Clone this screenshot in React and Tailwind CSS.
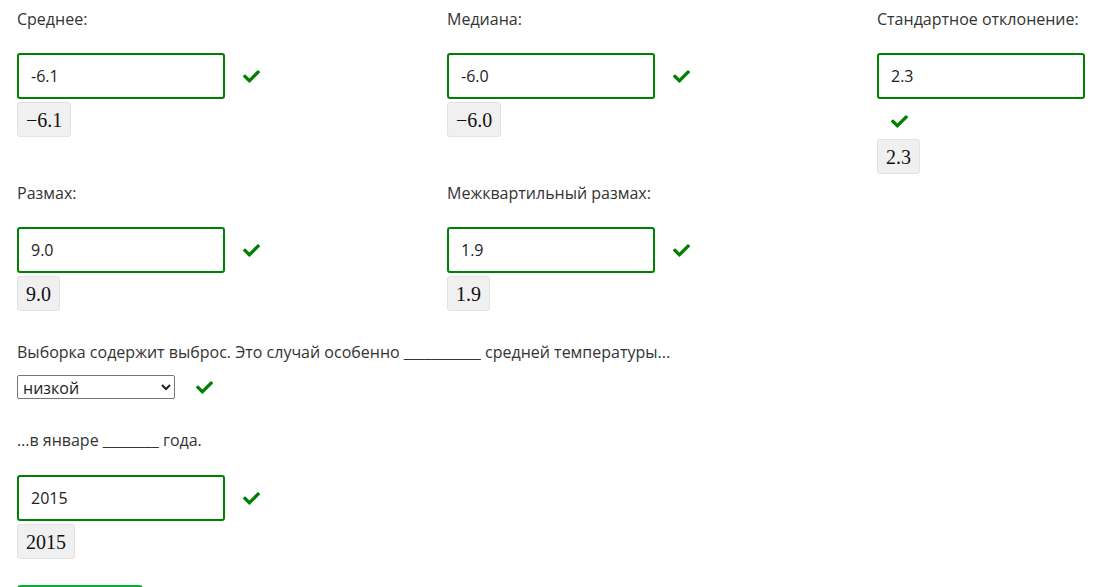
import React from 'react';
import { FaCheck } from 'react-icons/fa';

const Check = () => (
  <span className="inline-flex h-[40px] items-center align-middle ml-[14px] text-[#008000]">
    <FaCheck size={17} />
  </span>
);

const MathBox = ({ children }) => (
  <span className="inline-flex h-[35px] items-center px-[8px] bg-[#f0f0f0] border border-[#e2e2e2] rounded-[3px] text-[20px] text-[#111] font-['Liberation_Serif',serif]">
    {children}
  </span>
);

const AnswerInput = ({ value }) => (
  <input
    type="text"
    readOnly
    value={value}
    className="inline-block align-middle w-[208px] h-[46px] px-[12px] border-2 border-[#008000] rounded-[3px] text-[16px] text-[#222] outline-none bg-white"
  />
);

const Field = ({ label, value, math }) => (
  <div className="w-[430px] shrink-0">
    <p className="leading-[22px] mb-[23px]">{label}</p>
    <div className="leading-[22px]">
      <AnswerInput value={value} /> <Check />
    </div>
    <div className="mt-[3px]">
      <MathBox>{math}</MathBox>
    </div>
  </div>
);

const App = () => {
  return (
    <div className="pl-[17px] pt-[8px] text-[16px] text-[#333] font-['Open_Sans',sans-serif] bg-white min-h-screen overflow-hidden">
      {/* row 1 */}
      <div className="flex">
        <Field label="Среднее:" value="-6.1" math="−6.1" />
        <Field label="Медиана:" value="-6.0" math="−6.0" />
        <div className="w-[222px] shrink-0">
          <p className="leading-[22px] mb-[23px] whitespace-nowrap">Стандартное отклонение:</p>
          <AnswerInput value="2.3" />
          <div className="flex items-center h-[40px] pt-[4px] pl-[14px] text-[#008000]">
            <FaCheck size={17} />
          </div>
          <div>
            <MathBox>2.3</MathBox>
          </div>
        </div>
      </div>

      {/* row 2 */}
      <div className="flex mt-[8px]">
        <Field label="Размах:" value="9.0" math="9.0" />
        <Field label="Межквартильный размах:" value="1.9" math="1.9" />
      </div>

      {/* select question */}
      <p className="leading-[22px] mt-[30px]">
        Выборка содержит выброс. Это случай особенно ___________ средней температуры...
      </p>
      <div className="flex items-center mt-[12px] h-[24px]">
        <select
          defaultValue="низкой"
          className="w-[158px] h-[24px] border border-[#767676] rounded-[2px] bg-white text-[16px] text-[#222] pl-[1px]"
        >
          <option>низкой</option>
          <option>высокой</option>
        </select>
        <span className="ml-[21px] text-[#008000]">
          <FaCheck size={17} />
        </span>
      </div>

      {/* year question */}
      <p className="leading-[22px] mt-[30px] mb-[24px]">…в январе ________ года.</p>
      <div className="leading-[22px]">
        <AnswerInput value="2015" /> <Check />
      </div>
      <div className="mt-[3px]">
        <MathBox>2015</MathBox>
      </div>

      <button className="mt-[26px] w-[126px] h-[40px] bg-[#10a83a] rounded-[4px]" aria-label="Проверить" />
    </div>
  );
};

export default App;
